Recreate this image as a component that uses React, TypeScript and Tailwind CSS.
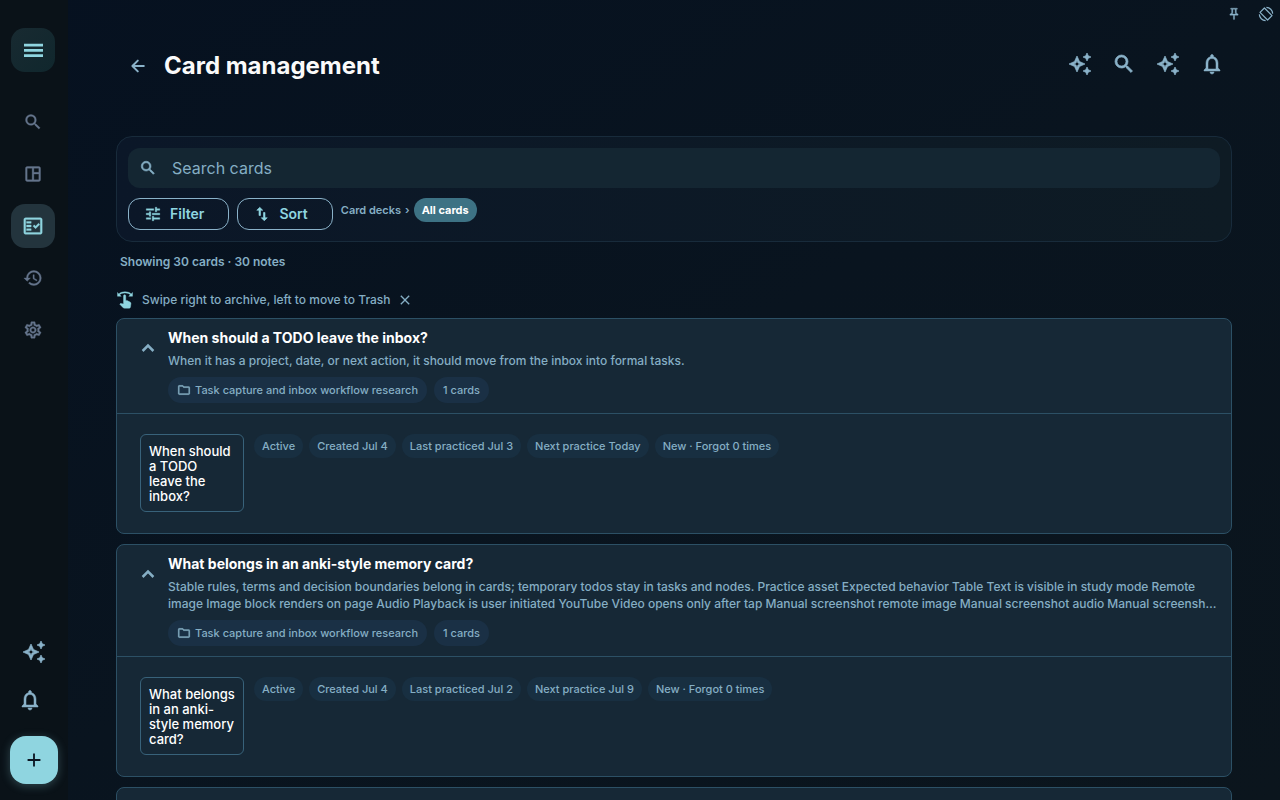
import { useState } from 'react';
import {
  MdAdd,
  MdClose,
  MdHistory,
  MdNotificationsNone,
  MdOutlineAutoAwesome,
  MdOutlineFactCheck,
  MdOutlineFolder,
  MdOutlinePushPin,
  MdOutlineSettings,
  MdOutlineSpaceDashboard,
  MdSearch,
  MdSwapVert,
  MdSwipe,
  MdTune,
} from 'react-icons/md';

interface Note {
  title: string;
  front: string;
  summary: string;
  deck: string;
  tags: string[];
}

const NOTES: Note[] = [
  {
    title: 'When should a TODO leave the inbox?',
    front: 'When should a TODO\nleave the inbox?',
    summary: 'When it has a project, date, or next action, it should move from the inbox into formal tasks.',
    deck: 'Task capture and inbox workflow research',
    tags: ['Active', 'Created Jul 4', 'Last practiced Jul 3', 'Next practice Today', 'New · Forgot 0 times'],
  },
  {
    title: 'What belongs in an anki-style memory card?',
    front: 'What belongs in an anki-style memory card?',
    summary:
      'Stable rules, terms and decision boundaries belong in cards; temporary todos stay in tasks and nodes. Practice asset Expected behavior Table Text is visible in study mode Remote image Image block renders on page Audio Playback is user initiated YouTube Video opens only after tap Manual screenshot remote image Manual screenshot audio Manual screensh…',
    deck: 'Task capture and inbox workflow research',
    tags: ['Active', 'Created Jul 4', 'Last practiced Jul 2', 'Next practice Jul 9', 'New · Forgot 0 times'],
  },
];

const NAV = [
  { id: 'search', label: 'Search', icon: MdSearch },
  { id: 'board', label: 'Board', icon: MdOutlineSpaceDashboard },
  { id: 'cards', label: 'Cards', icon: MdOutlineFactCheck },
  { id: 'history', label: 'History', icon: MdHistory },
  { id: 'settings', label: 'Settings', icon: MdOutlineSettings },
];

function MenuIcon() {
  return (
    <svg className="w-5 h-5" viewBox="0 0 20 20" fill="none" stroke="currentColor" strokeWidth={2.7}>
      <path d="M1 5.1h19M1 10.4h19M1 15.6h19" />
    </svg>
  );
}

function BackIcon() {
  return (
    <svg className="w-4 h-4" viewBox="0 0 16 16" fill="none" stroke="currentColor" strokeWidth={2} strokeLinecap="round" strokeLinejoin="round">
      <path d="M13.8 8H2.6M7.8 2.6L2.4 8l5.4 5.4" />
    </svg>
  );
}

function ChevronUpIcon() {
  return (
    <svg className="w-4 h-4" viewBox="0 0 16 16" fill="none" stroke="currentColor" strokeWidth={2.5}>
      <path d="M2.6 11L8 5.6l5.4 5.4" />
    </svg>
  );
}

function RotateScreenIcon() {
  return (
    <svg className="w-4 h-4" viewBox="0 0 16 16" fill="none" stroke="currentColor" strokeWidth={1.2}>
      <path d="M6.4 2L2 6.4L9.6 14L14 9.6z" strokeLinejoin="round" />
      <path d="M8.4 1.3a6.7 6.7 0 0 1 6.3 6.3M7.6 14.7a6.7 6.7 0 0 1-6.3-6.3" />
    </svg>
  );
}

function Sidebar() {
  const [active, setActive] = useState('cards');

  return (
    <aside className="w-[68px] shrink-0 h-full bg-[#0a1218] flex flex-col items-center pt-7 pb-4 pr-[2px]">
      <button
        aria-label="Menu"
        className="w-11 h-11 rounded-[14px] bg-linear-to-br from-[#182a31] to-[#10272d] text-[#8fd5e0] flex items-center justify-center"
      >
        <MenuIcon />
      </button>

      <nav className="mt-7 flex flex-col gap-2">
        {NAV.map(({ id, label, icon: Icon }) => (
          <button
            key={id}
            aria-label={label}
            onClick={() => setActive(id)}
            className={
              active === id
                ? 'w-11 h-11 rounded-[14px] bg-[#23343d] text-[#8fd5e0] flex items-center justify-center'
                : 'w-11 h-11 rounded-[14px] text-[#64748b] flex items-center justify-center'
            }
          >
            <Icon size={active === id ? 22 : 20} strokeWidth={0.4} />
          </button>
        ))}
      </nav>

      <div className="mt-auto pl-[2px] flex flex-col items-center">
        <button aria-label="Assistant" className="w-12 h-12 flex items-center justify-center text-[#8ab2c9]">
          <MdOutlineAutoAwesome size={24} strokeWidth={0.7} />
        </button>
        <button aria-label="Notifications" className="w-12 h-12 pr-2 flex items-center justify-center text-[#8ab2c9]">
          <MdNotificationsNone size={24} strokeWidth={0.5} />
        </button>
        <button
          aria-label="Add card"
          className="mt-3 w-12 h-12 rounded-2xl bg-[#8fd5e0] text-[#0b1622] flex items-center justify-center shadow-[0_2px_10px_rgba(143,213,224,0.28)]"
        >
          <MdAdd size={22} />
        </button>
      </div>
    </aside>
  );
}

function Header() {
  return (
    <header className="h-11 flex items-center">
      <button aria-label="Back" className="w-11 h-11 flex items-center justify-center text-[#8ab2c9]">
        <BackIcon />
      </button>
      <h1 className="ml-1 text-2xl font-bold text-[#fafafa]">Card management</h1>
      <div className="ml-auto -mt-1 flex text-[#8ab2c9]">
        <button aria-label="Assistant" className="w-11 h-11 flex items-center justify-center">
          <MdOutlineAutoAwesome size={24} strokeWidth={0.7} />
        </button>
        <button aria-label="Search" className="w-11 h-11 flex items-center justify-center">
          <MdSearch size={24} strokeWidth={0.7} />
        </button>
        <button aria-label="Suggestions" className="w-11 h-11 flex items-center justify-center">
          <MdOutlineAutoAwesome size={24} strokeWidth={0.7} />
        </button>
        <button aria-label="Notifications" className="w-11 h-11 flex items-center justify-center">
          <MdNotificationsNone size={24} strokeWidth={0.5} />
        </button>
      </div>
    </header>
  );
}

function SearchPanel() {
  return (
    <section className="rounded-2xl border border-[#182b3b] bg-linear-to-r from-[#0b1728] to-[#0e1b24] p-[11px]">
      <label className="h-10 rounded-xl bg-[#142632] flex items-center pl-[11px] gap-[15px] text-[#85aec4]">
        <MdSearch className="shrink-0" size={18} strokeWidth={0.8} />
        <input
          type="text"
          aria-label="Search cards"
          placeholder="Search cards"
          className="flex-1 min-w-0 bg-transparent outline-none text-base placeholder:text-[#85aec4]"
        />
      </label>
      <div className="mt-[10px] flex items-start gap-2">
        <button className="h-8 pl-[15px] pr-6 rounded-xl border border-[#8ab2c9] text-[#8fd5e0] text-sm font-semibold flex items-center gap-2">
          <MdTune size={18} strokeWidth={0.5} />
          Filter
        </button>
        <button className="h-8 pl-[15px] pr-6 rounded-xl border border-[#8ab2c9] text-[#8fd5e0] text-sm font-semibold flex items-center gap-2">
          <MdSwapVert size={18} strokeWidth={0.8} />
          Sort
        </button>
        <div className="h-6 flex items-center gap-1 text-[11px] font-semibold text-[#85aec4]">
          <a href="#decks">Card decks</a>
          <span>›</span>
          <a href="#all" className="h-6 px-2 rounded-full bg-[#3d7284] text-white font-bold flex items-center">
            All cards
          </a>
        </div>
      </div>
    </section>
  );
}

function NoteCard({ note }: { note: Note }) {
  const [open, setOpen] = useState(true);

  return (
    <article className="rounded-lg border border-[#2c5065] bg-[#162836]">
      <div className="flex pt-[9px] pb-[10px] pl-3 pr-2">
        <button
          aria-label={open ? 'Collapse note' : 'Expand note'}
          aria-expanded={open}
          onClick={() => setOpen(!open)}
          className="w-[39px] h-10 pr-[2px] shrink-0 flex items-center justify-center text-[#85aec4]"
        >
          <ChevronUpIcon />
        </button>
        <div className="min-w-0">
          <h2 className="text-sm leading-5 font-bold text-white">{note.title}</h2>
          <p className="mt-1 text-xs leading-[17px] font-medium text-[#85aec4]">{note.summary}</p>
          <div className="mt-2 flex gap-[7px] text-[11px] font-medium text-[#85aec4]">
            <span className="h-[26px] px-[9px] rounded-full bg-[#1a3045] flex items-center gap-1">
              <MdOutlineFolder size={14} strokeWidth={0.5} />
              {note.deck}
            </span>
            <span className="h-[26px] px-[9px] rounded-full bg-[#1a3045] flex items-center">1 cards</span>
          </div>
        </div>
      </div>

      {open && (
        <div className="border-t border-[#2c5065] px-[23px] pt-5 pb-[21px] flex items-start gap-[10px]">
          <div className="w-[104px] shrink-0 rounded-md border border-[#38627a] px-2 pt-[9px] pb-[7px] text-[13px] leading-[15px] font-medium text-white whitespace-pre-line">
            {note.front}
          </div>
          <ul className="flex flex-wrap gap-[6px] text-[11px] font-medium text-[#85aec4]">
            {note.tags.map((tag) => (
              <li key={tag} className="h-6 px-2 rounded-full bg-[#182f41] flex items-center">
                {tag}
              </li>
            ))}
          </ul>
        </div>
      )}
    </article>
  );
}

export default function App() {
  const [showHint, setShowHint] = useState(true);

  // the md icons carry an unfilled bounding path that must not pick up the stroke
  return (
    <div className="h-screen flex overflow-hidden bg-linear-to-br from-[#061120] via-[#09141f] to-[#0b151d] font-['Inter',sans-serif] [&_path[fill=none]]:stroke-none [&_rect[fill=none]]:stroke-none">
      <Sidebar />

      <div className="flex-1 min-w-0 h-full overflow-hidden">
        <div className="h-7 flex items-center justify-end gap-4 pr-[6px] text-[#8ab2c9]">
          <button aria-label="Pin window" className="w-4 h-4 flex items-center justify-center">
            <MdOutlinePushPin size={14} strokeWidth={0.6} />
          </button>
          <button aria-label="Rotate screen" className="w-4 h-4">
            <RotateScreenIcon />
          </button>
        </div>

        <main className="px-12 pt-4">
          <div className="-mr-[2px]">
            <Header />
          </div>

          <div className="mt-12">
            <SearchPanel />
          </div>

          <p className="mt-3 pl-1 text-xs leading-4 font-semibold text-[#85aec4]">Showing 30 cards · 30 notes</p>

          {showHint && (
            <div className="mt-5 h-5 flex items-center text-xs font-medium text-[#85aec4]">
              <MdSwipe className="text-[#8fd5e0]" size={18} strokeWidth={0.5} />
              <span className="ml-2">Swipe right to archive, left to move to Trash</span>
              <button aria-label="Dismiss hint" onClick={() => setShowHint(false)} className="ml-[6px]">
                <MdClose size={16} />
              </button>
            </div>
          )}

          <div className="mt-2 flex flex-col gap-[10px]">
            {NOTES.map((note) => (
              <NoteCard key={note.title} note={note} />
            ))}
            <article className="h-24 rounded-lg border border-[#2c5065] bg-[#162836]" />
          </div>
        </main>
      </div>
    </div>
  );
}
